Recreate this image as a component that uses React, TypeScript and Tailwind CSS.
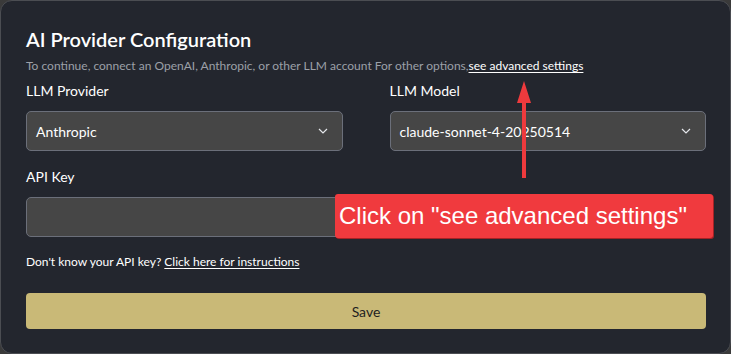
import React, { useState } from "react";

const font = { fontFamily: "Lato, 'Noto Sans', sans-serif" };

function Chevron() {
  return (
    <svg width="10" height="6" viewBox="0 0 10 6" fill="none" className="shrink-0">
      <path d="M1 1l4 4 4-4" stroke="#e5e7eb" strokeWidth="1.2" />
    </svg>
  );
}

function Select({ value }: { value: string }) {
  return (
    <div className="h-[40px] flex items-center justify-between pl-[9px] pr-[14px] rounded-[5px] bg-[#464646] border border-[#6b6f7a] text-white text-[14px]">
      <span>{value}</span>
      <Chevron />
    </div>
  );
}

export default function App() {
  const [apiKey, setApiKey] = useState("");

  return (
    <div className="w-[731px] h-[354px] bg-[#3a3a3a] relative" style={font}>
      <div className="w-[731px] h-[354px] rounded-[12px] border border-[#4b4d52] bg-[#23262e] pt-[24px] pl-[25px] pr-[24px] flex flex-col">
        <h1 className="text-[20px] leading-7 font-semibold text-white">AI Provider Configuration</h1>
        <p className="mt-[5px] text-[12px] leading-4 text-[#9ca0a8]">
          To continue, connect an OpenAI, Anthropic, or other LLM account For other options,
          <a className="text-white underline underline-offset-2">see advanced settings</a>
        </p>

        <div className="mt-[7px] grid grid-cols-2 gap-x-[47px]">
          <div>
            <div className="text-[14px] leading-5 text-white">LLM Provider</div>
            <div className="mt-[10px]">
              <Select value="Anthropic" />
            </div>
          </div>
          <div>
            <div className="text-[14px] leading-5 text-white">LLM Model</div>
            <div className="mt-[10px]">
              <Select value="claude-sonnet-4-20250514" />
            </div>
          </div>
        </div>

        <div className="mt-[16px] text-[14px] leading-5 text-white">API Key</div>
        <input
          value={apiKey}
          onChange={(e) => setApiKey(e.target.value)}
          className="mt-[10px] h-[40px] rounded-[5px] bg-[#464646] border border-[#6b6f7a] px-3 text-white text-[14px] outline-none"
        />

        <p className="mt-[17px] text-[12px] leading-4 text-white">
          Don't know your API key? <a className="underline underline-offset-2">Click here for instructions</a>
        </p>

        <button className="mt-[23px] h-[36px] rounded-[4px] bg-[#c9b977] text-[#1f1f1f] text-[14px]">Save</button>
      </div>

      {/* annotation overlay */}
      <svg className="absolute left-[512px] top-[78px]" width="24" height="102" viewBox="0 0 24 102">
        <path d="M12 3L19 25H14V100H10V25H5Z" fill="#ee3a3d" />
      </svg>
      <div
        className="absolute left-[335px] top-[194px] w-[378px] h-[44px] rounded-[3px] bg-[#f03a3e] shadow-[1px_1px_0_#a52225] flex items-center pl-[4px] text-white text-[24px]"
        style={{ fontFamily: "'Liberation Sans', Arial, sans-serif" }}
      >
        Click on "see advanced settings"
      </div>
    </div>
  );
}
